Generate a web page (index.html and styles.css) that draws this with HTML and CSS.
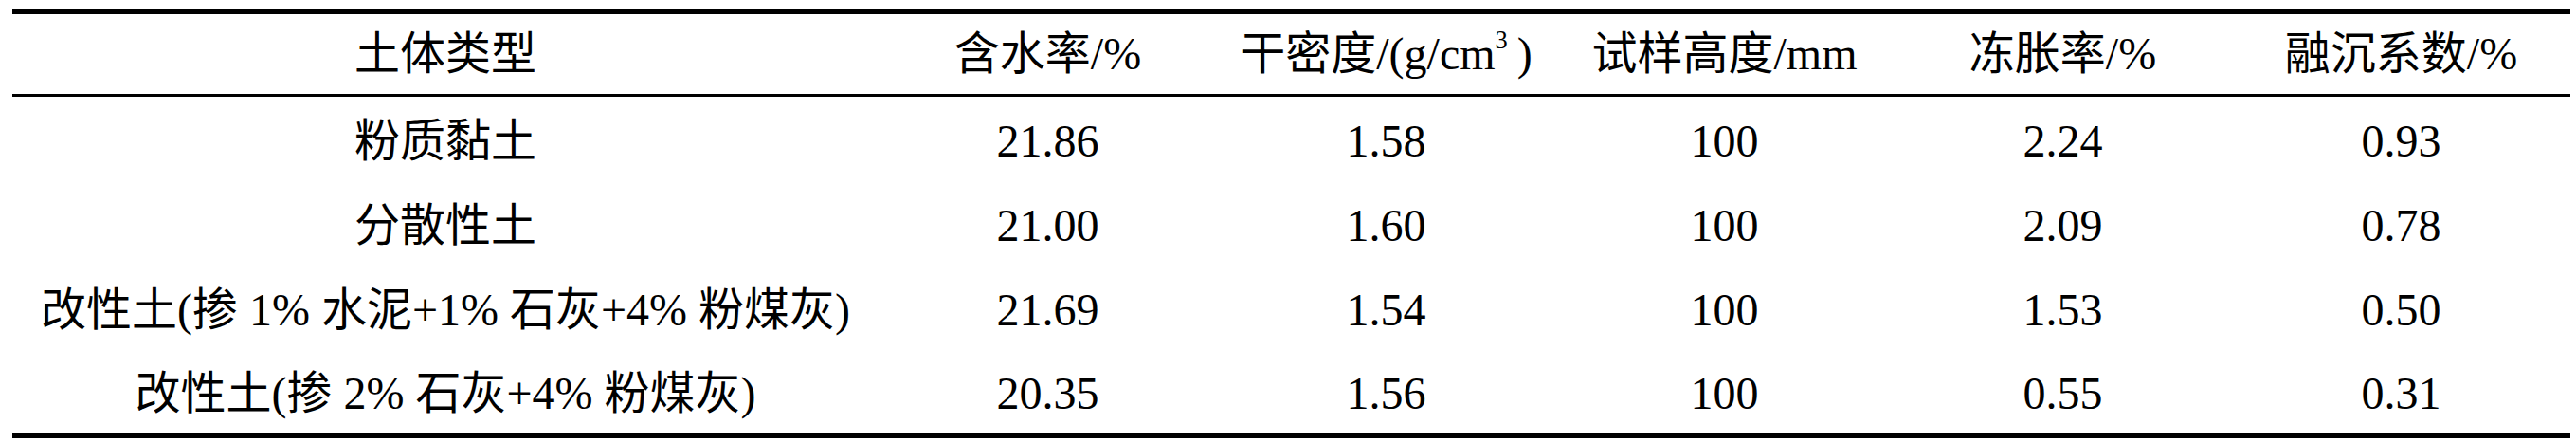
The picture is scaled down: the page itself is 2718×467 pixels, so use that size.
FILE: index.html
```html
<!DOCTYPE html>
<html lang="zh-CN">
<head>
  <meta charset="UTF-8" />
  <title>土体冻胀融沉试验结果</title>
  <link rel="stylesheet" href="styles.css">
</head>
<body>

  <!-- 土体冻融试验结果表 -->
  <div class="table-wrap">
    <table class="data-table">
      <colgroup>
        <col class="col-type">
        <col class="col-num">
        <col class="col-num">
        <col class="col-num">
        <col class="col-num">
        <col class="col-num">
      </colgroup>
      <thead>
        <tr>
          <th>土体类型</th>
          <th>含水率/%</th>
          <th>干密度/(g/cm<sup>3</sup>)</th>
          <th>试样高度/mm</th>
          <th>冻胀率/%</th>
          <th>融沉系数/%</th>
        </tr>
      </thead>
      <tbody>
        <tr>
          <td>粉质黏土</td>
          <td>21.86</td>
          <td>1.58</td>
          <td>100</td>
          <td>2.24</td>
          <td>0.93</td>
        </tr>
        <tr>
          <td>分散性土</td>
          <td>21.00</td>
          <td>1.60</td>
          <td>100</td>
          <td>2.09</td>
          <td>0.78</td>
        </tr>
        <tr>
          <td>改性土(掺 1% 水泥+1% 石灰+4% 粉煤灰)</td>
          <td>21.69</td>
          <td>1.54</td>
          <td>100</td>
          <td>1.53</td>
          <td>0.50</td>
        </tr>
        <tr>
          <td>改性土(掺 2% 石灰+4% 粉煤灰)</td>
          <td>20.35</td>
          <td>1.56</td>
          <td>100</td>
          <td>0.55</td>
          <td>0.31</td>
        </tr>
      </tbody>
    </table>
  </div>

</body>
</html>
```

FILE: styles.css
```css
/* Reset & Base */
* {
  box-sizing: border-box;
  margin: 0;
  padding: 0;
}

body {
  font-family: 'Liberation Serif', 'Noto Sans CJK SC', serif;
  background-color: #fff;
  color: #000;
}

/* Table wrapper */
.table-wrap {
  padding: 9px 0 0 13px;
}

/* Three-line table */
.data-table {
  width: 2699px;
  table-layout: fixed;
  border-collapse: separate;
  border-spacing: 0;
  border-top: 6px solid #000;
  border-bottom: 6px solid #000;
  font-size: 48px;
  line-height: 1.2;
}

.col-type {
  width: 914px;
}

.col-num {
  width: 357px;
}

th, td {
  text-align: center;
  vertical-align: middle;
  font-weight: normal;
  white-space: nowrap;
}

th {
  height: 87px;
  border-bottom: 3px solid #000;
}

th sup {
  font-size: 0.55em;
  line-height: 0;
  vertical-align: 0.85em;
  margin-right: 10px;
}

td {
  height: 89px;
}

tbody tr:first-child td {
  height: 91px;
  padding-top: 2px;
}

tbody tr:last-child td {
  height: 85px;
  padding-top: 3px;
}
```
